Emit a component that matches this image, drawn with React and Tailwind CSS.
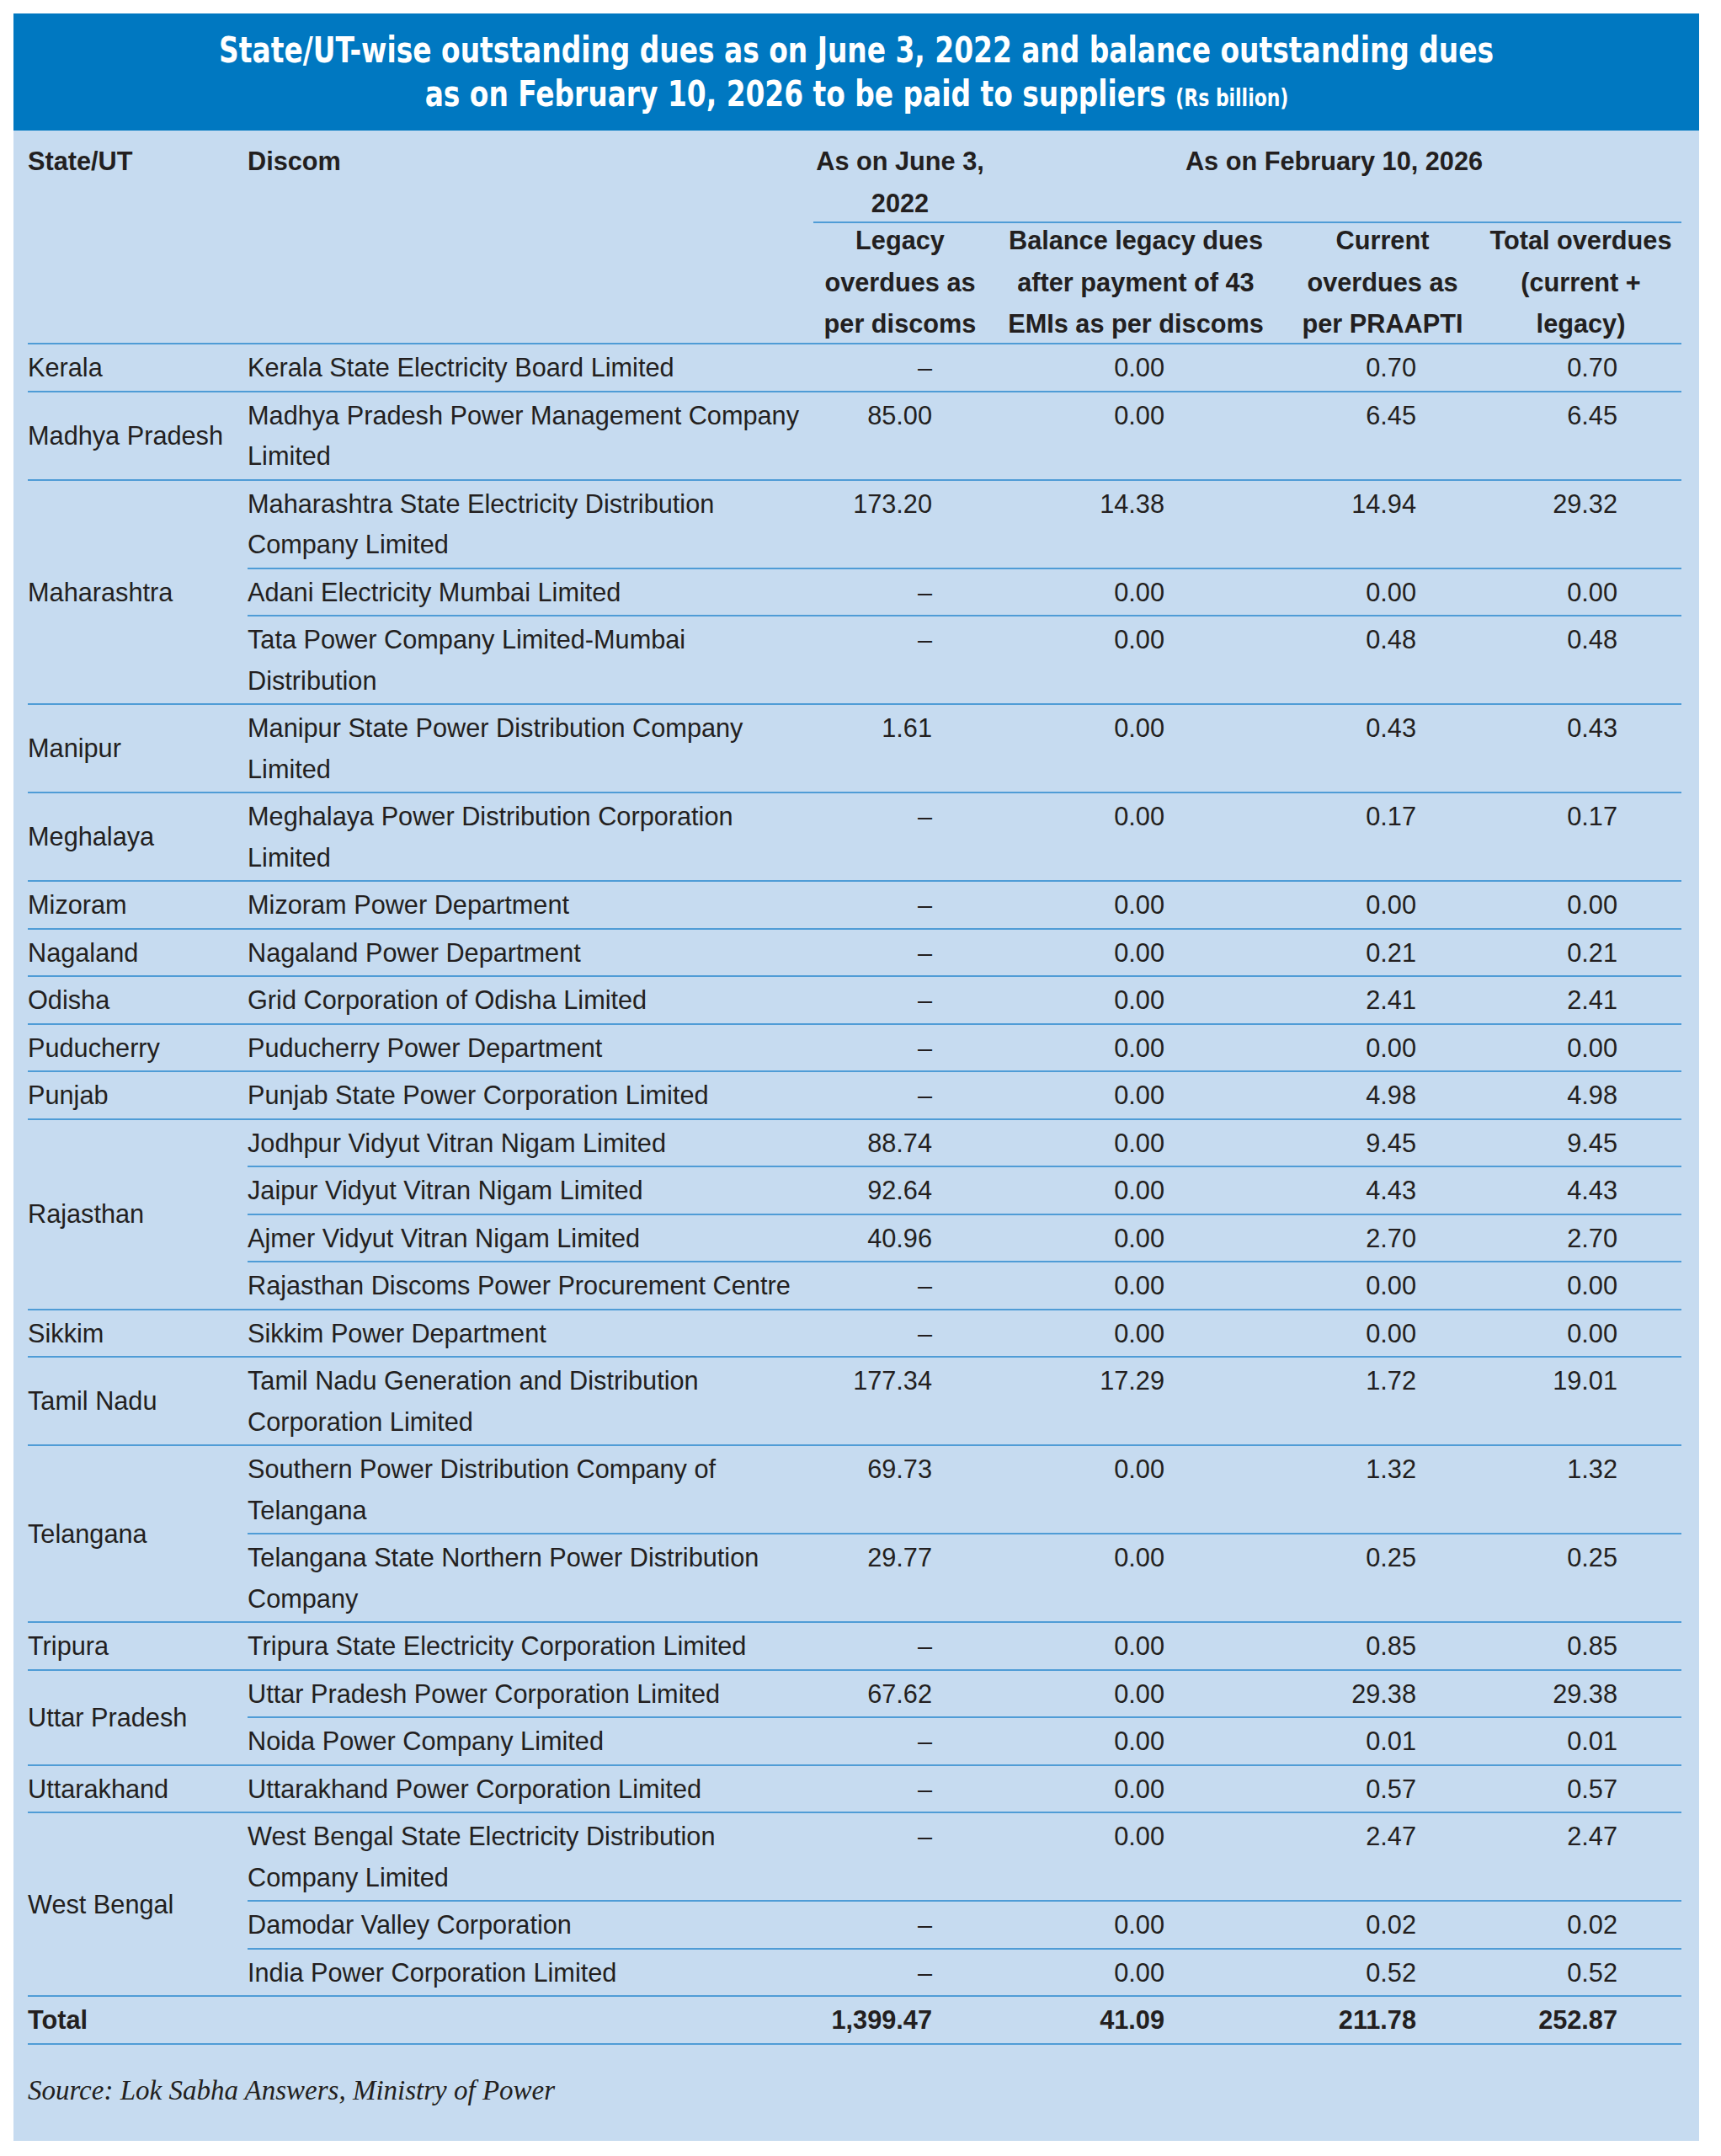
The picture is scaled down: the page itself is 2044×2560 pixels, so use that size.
import React from "react";

const GROUPS = [
  { state: "Kerala", items: [{ discom: ["Kerala State Electricity Board Limited"], v: ["–", "0.00", "0.70", "0.70"] }] },
  { state: "Madhya Pradesh", items: [{ discom: ["Madhya Pradesh Power Management Company", "Limited"], v: ["85.00", "0.00", "6.45", "6.45"] }] },
  {
    state: "Maharashtra",
    items: [
      { discom: ["Maharashtra State Electricity Distribution", "Company Limited"], v: ["173.20", "14.38", "14.94", "29.32"] },
      { discom: ["Adani Electricity Mumbai Limited"], v: ["–", "0.00", "0.00", "0.00"] },
      { discom: ["Tata Power Company Limited-Mumbai", "Distribution"], v: ["–", "0.00", "0.48", "0.48"] }
    ]
  },
  { state: "Manipur", items: [{ discom: ["Manipur State Power Distribution Company", "Limited"], v: ["1.61", "0.00", "0.43", "0.43"] }] },
  { state: "Meghalaya", items: [{ discom: ["Meghalaya Power Distribution Corporation", "Limited"], v: ["–", "0.00", "0.17", "0.17"] }] },
  { state: "Mizoram", items: [{ discom: ["Mizoram Power Department"], v: ["–", "0.00", "0.00", "0.00"] }] },
  { state: "Nagaland", items: [{ discom: ["Nagaland Power Department"], v: ["–", "0.00", "0.21", "0.21"] }] },
  { state: "Odisha", items: [{ discom: ["Grid Corporation of Odisha Limited"], v: ["–", "0.00", "2.41", "2.41"] }] },
  { state: "Puducherry", items: [{ discom: ["Puducherry Power Department"], v: ["–", "0.00", "0.00", "0.00"] }] },
  { state: "Punjab", items: [{ discom: ["Punjab State Power Corporation Limited"], v: ["–", "0.00", "4.98", "4.98"] }] },
  {
    state: "Rajasthan",
    items: [
      { discom: ["Jodhpur Vidyut Vitran Nigam Limited"], v: ["88.74", "0.00", "9.45", "9.45"] },
      { discom: ["Jaipur Vidyut Vitran Nigam Limited"], v: ["92.64", "0.00", "4.43", "4.43"] },
      { discom: ["Ajmer Vidyut Vitran Nigam Limited"], v: ["40.96", "0.00", "2.70", "2.70"] },
      { discom: ["Rajasthan Discoms Power Procurement Centre"], v: ["–", "0.00", "0.00", "0.00"] }
    ]
  },
  { state: "Sikkim", items: [{ discom: ["Sikkim Power Department"], v: ["–", "0.00", "0.00", "0.00"] }] },
  { state: "Tamil Nadu", items: [{ discom: ["Tamil Nadu Generation and Distribution", "Corporation Limited"], v: ["177.34", "17.29", "1.72", "19.01"] }] },
  {
    state: "Telangana",
    items: [
      { discom: ["Southern Power Distribution Company of", "Telangana"], v: ["69.73", "0.00", "1.32", "1.32"] },
      { discom: ["Telangana State Northern Power Distribution", "Company"], v: ["29.77", "0.00", "0.25", "0.25"] }
    ]
  },
  { state: "Tripura", items: [{ discom: ["Tripura State Electricity Corporation Limited"], v: ["–", "0.00", "0.85", "0.85"] }] },
  {
    state: "Uttar Pradesh",
    items: [
      { discom: ["Uttar Pradesh Power Corporation Limited"], v: ["67.62", "0.00", "29.38", "29.38"] },
      { discom: ["Noida Power Company Limited"], v: ["–", "0.00", "0.01", "0.01"] }
    ]
  },
  { state: "Uttarakhand", items: [{ discom: ["Uttarakhand Power Corporation Limited"], v: ["–", "0.00", "0.57", "0.57"] }] },
  {
    state: "West Bengal",
    items: [
      { discom: ["West Bengal State Electricity Distribution", "Company Limited"], v: ["–", "0.00", "2.47", "2.47"] },
      { discom: ["Damodar Valley Corporation"], v: ["–", "0.00", "0.02", "0.02"] },
      { discom: ["India Power Corporation Limited"], v: ["–", "0.00", "0.52", "0.52"] }
    ]
  }
];

const TOTAL = ["1,399.47", "41.09", "211.78", "252.87"];

function Values({ v }) {
  return (
    <>
      <div className="w-[206px] shrink-0 pr-[65px] text-right">{v[0]}</div>
      <div className="w-[354px] shrink-0 pr-[143px] text-right">{v[1]}</div>
      <div className="w-[232px] shrink-0 pr-[76px] text-right">{v[2]}</div>
      <div className="w-[239px] shrink-0 pr-[76px] text-right">{v[3]}</div>
    </>
  );
}

function Group({ group }) {
  return (
    <div className="flex border-b-2 border-[#4f9cd6]">
      <div className="flex w-[261px] shrink-0 items-center pt-[4px] pb-[2px]">{group.state}</div>
      <div className="flex w-[1703px] flex-col">
        {group.items.map((item, i) => (
          <div
            key={i}
            className={
              i < group.items.length - 1
                ? "flex border-b-2 border-[#4f9cd6] pt-[4px] pb-[2px]"
                : "flex pt-[4px] pb-[2px]"
            }
          >
            <div className="w-[672px] shrink-0">
              {item.discom.map((line) => (
                <div key={line} className="whitespace-nowrap">{line}</div>
              ))}
            </div>
            <Values v={item.v} />
          </div>
        ))}
      </div>
    </div>
  );
}

export default function App() {
  return (
    <div className="min-h-screen bg-white pt-[16px] pl-[16px] pb-[18px]">
      <div className="w-[2002px] bg-[#c6dbf0] text-[#231f20]" style={{ fontFamily: '"Liberation Sans", Arial, sans-serif' }}>
        <div
          className="flex h-[139px] flex-col items-center justify-center overflow-hidden bg-[#0078c1] text-[42px] font-bold text-white [font-stretch:condensed]"
          style={{ fontFamily: '"Liberation Sans Narrow", "Arial Narrow", "DejaVu Sans Condensed", sans-serif' }}
        >
          <div className="h-[52px] scale-x-[0.87] whitespace-nowrap leading-[52px]">
            State/UT-wise outstanding dues as on June 3, 2022 and balance outstanding dues
          </div>
          <div className="h-[52px] scale-x-[0.87] whitespace-nowrap leading-[52px]">
            as on February 10, 2026 to be paid to suppliers <span className="text-[28px] leading-none">(Rs billion)</span>
          </div>
        </div>

        <div className="pl-[17px] pr-[21px] text-[30.7px] leading-[48.5px]">
          {/* header */}
          <div className="flex border-b-2 border-[#4f9cd6] font-bold leading-[49.5px]">
            <div className="w-[261px] shrink-0 pt-[12px]">State/UT</div>
            <div className="w-[672px] shrink-0 pt-[12px]">Discom</div>
            <div className="flex w-[1031px] flex-col">
              <div className="flex h-[110px] shrink-0 overflow-visible border-b-2 border-[#4f9cd6] pt-[12px]">
                <div className="flex w-[206px] shrink-0 flex-col items-center whitespace-nowrap">
                  <div>As on June 3,</div>
                  <div>2022</div>
                </div>
                <div className="flex w-[825px] shrink-0 justify-center whitespace-nowrap">As on February 10, 2026</div>
              </div>
              <div className="flex h-[142px] shrink-0">
                <div className="-mt-[4px] flex w-[206px] shrink-0 flex-col items-center whitespace-nowrap">
                  <div>Legacy</div>
                  <div>overdues as</div>
                  <div>per discoms</div>
                </div>
                <div className="-mt-[4px] flex w-[354px] shrink-0 flex-col items-center whitespace-nowrap">
                  <div>Balance legacy dues</div>
                  <div>after payment of 43</div>
                  <div>EMIs as per discoms</div>
                </div>
                <div className="-mt-[4px] flex w-[232px] shrink-0 flex-col items-center whitespace-nowrap">
                  <div>Current</div>
                  <div>overdues as</div>
                  <div>per PRAAPTI</div>
                </div>
                <div className="-mt-[4px] flex w-[239px] shrink-0 flex-col items-center whitespace-nowrap">
                  <div>Total overdues</div>
                  <div>(current +</div>
                  <div>legacy)</div>
                </div>
              </div>
            </div>
          </div>

          {GROUPS.map((g) => (
            <Group key={g.state} group={g} />
          ))}

          {/* total */}
          <div className="flex border-b-2 border-[#4f9cd6] pt-[4px] pb-[2px] font-bold">
            <div className="w-[261px] shrink-0">Total</div>
            <div className="w-[672px] shrink-0" />
            <Values v={TOTAL} />
          </div>

          <div
            className="pt-[34px] pb-[40px] text-[33px] leading-[40px] italic"
            style={{ fontFamily: '"Liberation Serif", "Times New Roman", serif' }}
          >
            Source: Lok Sabha Answers, Ministry of Power
          </div>
        </div>
      </div>
    </div>
  );
}
